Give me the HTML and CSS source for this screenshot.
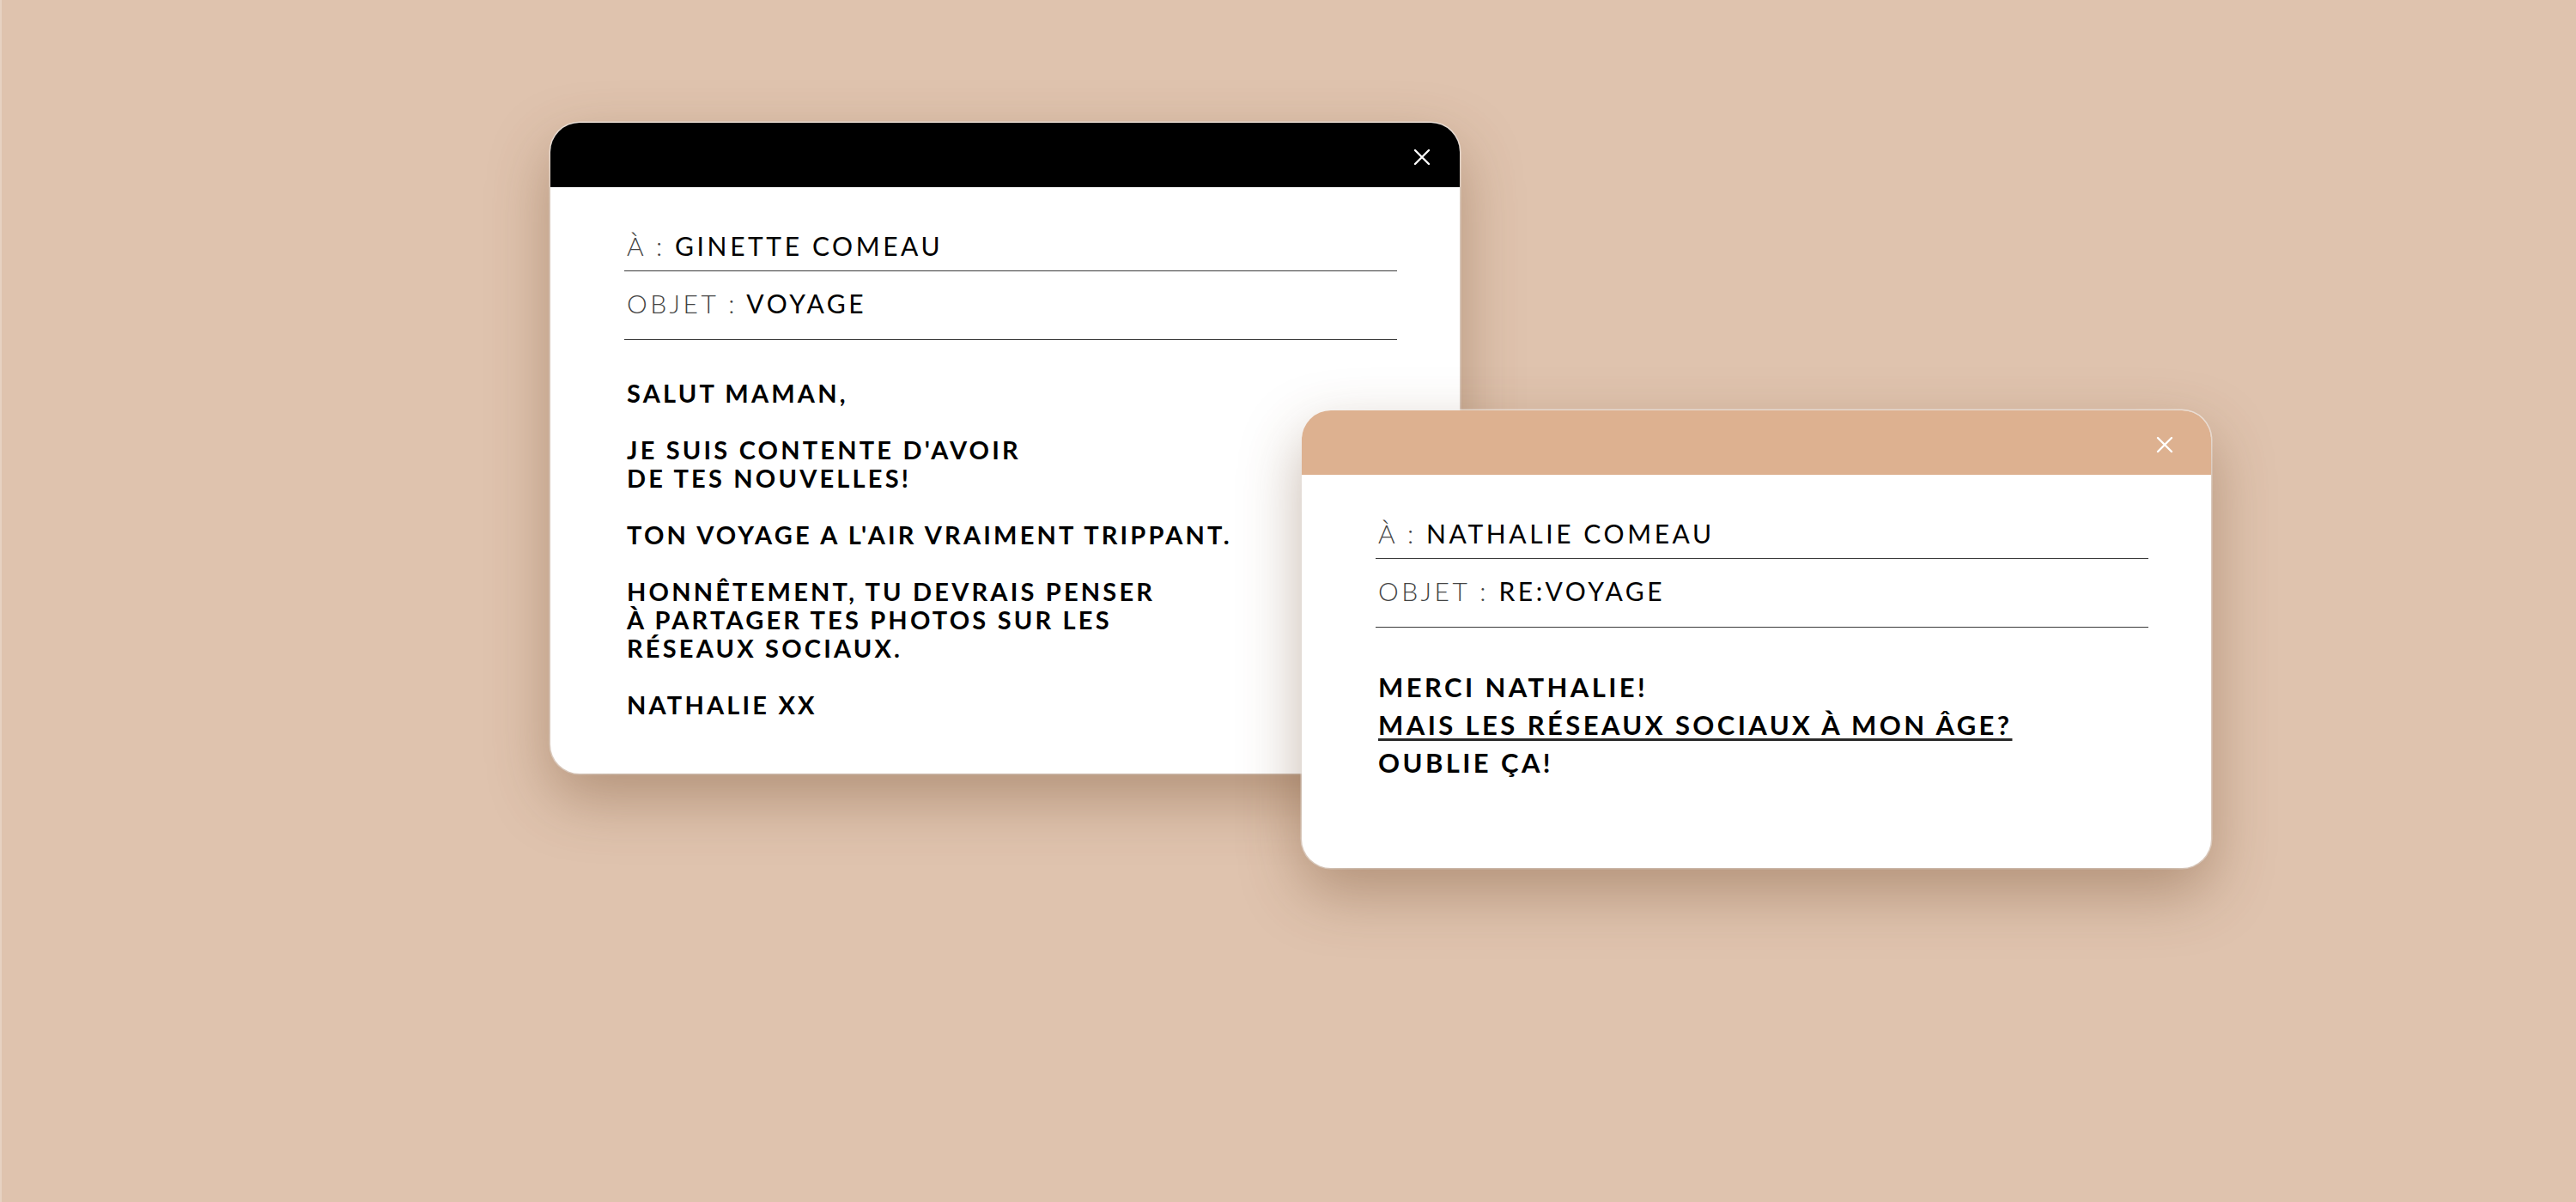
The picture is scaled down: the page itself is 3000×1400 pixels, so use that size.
FILE: index.html
```html
<!DOCTYPE html>
<html lang="fr">
<head>
    <meta charset="UTF-8">
    <meta name="viewport" content="width=device-width, initial-scale=1.0">
    <title>Voyage</title>
    <link rel="stylesheet" href="styles.css">
</head>
<body>
    <div class="desktop">
        <div class="window window-main">
            <div class="titlebar">
                <span class="close">
                    <svg width="20" height="20" viewBox="0 0 20 20"><path d="M2 2L18 18M18 2L2 18" stroke="#fff" stroke-width="2.4" stroke-linecap="round"/></svg>
                </span>
            </div>
            <div class="mail">
                <div class="field"><span class="label">À :</span> GINETTE COMEAU</div>
                <div class="field field-subject"><span class="label">OBJET :</span> VOYAGE</div>
                <div class="message">
                    <p>SALUT MAMAN,</p>
                    <p>JE SUIS CONTENTE D'AVOIR<br>DE TES NOUVELLES!</p>
                    <p>TON VOYAGE A L'AIR VRAIMENT TRIPPANT.</p>
                    <p>HONNÊTEMENT, TU DEVRAIS PENSER<br>À PARTAGER TES PHOTOS SUR LES<br>RÉSEAUX SOCIAUX.</p>
                    <p>NATHALIE XX</p>
                </div>
            </div>
        </div>
        <div class="window window-reply">
            <div class="titlebar">
                <span class="close">
                    <svg width="20" height="20" viewBox="0 0 20 20"><path d="M2 2L18 18M18 2L2 18" stroke="#fff" stroke-width="2.4" stroke-linecap="round"/></svg>
                </span>
            </div>
            <div class="mail">
                <div class="field"><span class="label">À :</span> NATHALIE COMEAU</div>
                <div class="field field-subject"><span class="label">OBJET :</span> RE:VOYAGE</div>
                <div class="message">
                    <p>MERCI NATHALIE!<br><u>MAIS LES RÉSEAUX SOCIAUX À MON ÂGE?</u><br>OUBLIE ÇA!</p>
                </div>
            </div>
        </div>
    </div>
</body>
</html>
```

FILE: styles.css
```css
*{
    padding: 0;
    margin: 0;
    box-sizing: border-box;
}
body{
    background-color: #dfc3ae;
    font-family: Lato, "Liberation Sans", sans-serif;
    color: #000;
}
.desktop{
    position: relative;
    width: 3000px;
    height: 1400px;
    border-left: 2px solid #e7d2c2;
}
/* les fenetres sont posees sur le bureau */
.window{
    position: absolute;
    width: 1059px;
    background-color: #fff;
    border-radius: 34px;
    overflow: hidden;
    box-shadow: 0 28px 70px rgba(105,65,35,0.38), 0 0 0 1.5px rgba(255,255,255,0.6);
}
.window-main{
    left: 639px;
    top: 143px;
}
.window-reply{
    left: 1514px;
    top: 478px;
}
.titlebar{
    display: flex;
    justify-content: flex-end;
    align-items: center;
    height: 75px;
    padding-right: 34px;
    padding-top: 4px;
    background-color: #000;
}
.window-reply .titlebar{
    background-color: #ddb190;
    padding-right: 44px;
}
.close{
    display: flex;
    width: 20px;
    height: 20px;
}
.mail{
    padding: 50px 73px 64px 86px;
}
.window-reply .mail{
    padding-bottom: 101px;
}
.field{
    padding: 0 0 11px 3px;
    font-size: 30px;
    line-height: 36px;
    letter-spacing: 0.12em;
    font-weight: 400;
    border-bottom: 1.5px solid #3a3a3a;
}
.field-subject{
    padding-top: 19px;
    padding-bottom: 24px;
}
.label{
    font-weight: 300;
    color: #444;
}
.message{
    padding: 45px 0 0 3px;
    font-size: 29px;
    line-height: 33px;
    font-weight: 700;
    letter-spacing: 0.11em;
}
.message p{
    margin-bottom: 33px;
}
.message p:last-child{
    margin-bottom: 0;
}
.window-reply .message{
    padding-top: 47px;
    font-size: 31px;
    line-height: 44px;
}
.message u{
    text-decoration-thickness: 3px;
    text-underline-offset: 4px;
    text-decoration-color: #2a2a2a;
}
```
